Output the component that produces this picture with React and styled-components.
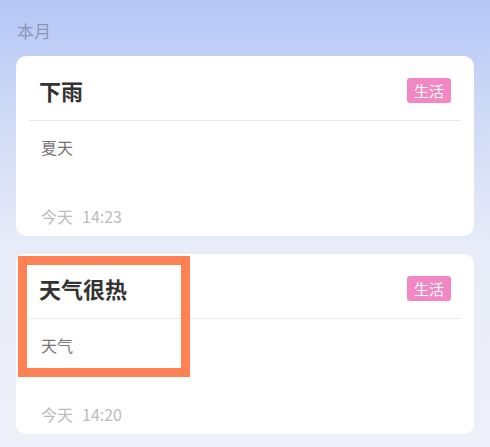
import React from 'react';
import styled, { createGlobalStyle } from 'styled-components';

const GlobalStyle = createGlobalStyle`
  html, body {
    margin: 0;
    padding: 0;
  }
  body {
    font-family: 'Noto Sans CJK SC', 'Noto Sans', sans-serif;
    background: linear-gradient(to bottom, #b5c7f7 0px, #d2dcf6 130px, #e8ecf8 250px, #eef0f9 447px);
    min-height: 447px;
  }
`;

const Page = styled.div`
  padding: 20px 16px 14px;
  display: flex;
  flex-direction: column;
`;

const SectionLabel = styled.div`
  font-size: 17px;
  line-height: 22px;
  color: #8c95b6;
  padding-left: 1px;
  margin-bottom: 14px;
`;

const List = styled.div`
  display: flex;
  flex-direction: column;
  gap: 18px;
`;

const Card = styled.div`
  position: relative;
  background: #fff;
  border-radius: 10px;
  padding: 0 13px;
`;

const Header = styled.div`
  display: flex;
  justify-content: space-between;
  align-items: flex-start;
  padding: 21px 10px 17px;
  border-bottom: 1px solid #e8e8e8;
  height: 26px;
`;

const Title = styled.div`
  font-size: 22px;
  line-height: 26px;
  font-weight: 700;
  color: #333;
`;

const Tag = styled.span`
  background: #f287c3;
  color: #fff;
  font-size: 15px;
  line-height: 25px;
  padding: 0 7px;
  border-radius: 3px;
  margin-top: 1px;
`;

const Body = styled.div`
  padding: 16px 12px 10px;
  display: flex;
  flex-direction: column;
`;

const Desc = styled.div`
  font-size: 16px;
  line-height: 20px;
  color: #777;
  min-height: 69px;
`;

const Time = styled.div`
  font-size: 16px;
  line-height: 20px;
  color: #bcbcbc;
  display: flex;
  gap: 9px;
`;

const Highlight = styled.div`
  position: absolute;
  left: 2px;
  top: 2px;
  width: 154px;
  height: 103px;
  border: 9px solid #fd8152;
  pointer-events: none;
`;

const notes = [
  { id: 1, title: '下雨', tag: '生活', desc: '夏天', day: '今天', time: '14:23' },
  { id: 2, title: '天气很热', tag: '生活', desc: '天气', day: '今天', time: '14:20', marked: true },
];

export default function App() {
  return (
    <>
      <GlobalStyle />
      <Page>
        <SectionLabel>本月</SectionLabel>
        <List>
          {notes.map((note) => (
            <Card key={note.id}>
              <Header>
                <Title>{note.title}</Title>
                <Tag>{note.tag}</Tag>
              </Header>
              <Body>
                <Desc>{note.desc}</Desc>
                <Time>
                  <span>{note.day}</span>
                  <span>{note.time}</span>
                </Time>
              </Body>
              {note.marked && <Highlight />}
            </Card>
          ))}
        </List>
      </Page>
    </>
  );
}
